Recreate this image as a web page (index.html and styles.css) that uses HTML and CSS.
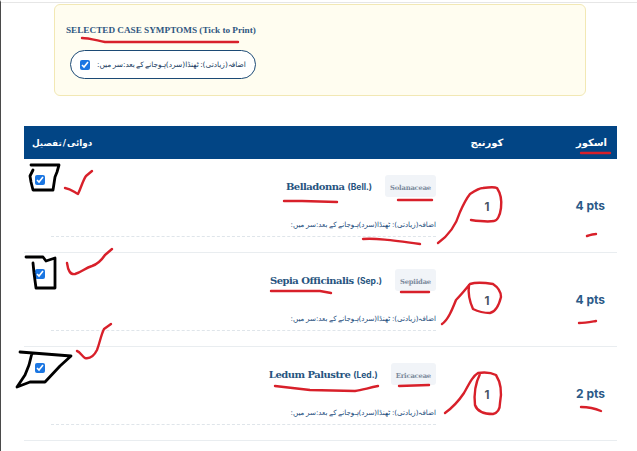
FILE: index.html
```html
<!DOCTYPE html>
<html lang="ur">
<head>
<meta charset="utf-8">
<title>Selected case symptoms</title>
<link rel="stylesheet" href="styles.css">
</head>
<body>
<main class="page">
  <section class="symptoms">
    <h2 class="symptoms-title">SELECTED CASE SYMPTOMS (Tick to Print)</h2>
    <label class="symptom-pill">
      <input type="checkbox" class="tick" checked>
      <span class="symptom-text" dir="rtl">اضافہ(زیادتی): ٹھنڈا(سرد)ہوجانے کے بعد:سر میں:</span>
    </label>
  </section>

  <section class="results">
    <div class="row head">
      <div class="col-main" dir="rtl">دوائی / تفصیل</div>
      <div class="col-cover" dir="rtl">کورنیج</div>
      <div class="col-score" dir="rtl">اسکور</div>
    </div>

    <article class="row item">
      <div class="col-main">
        <input type="checkbox" class="tick" checked>
        <div class="detail">
          <div class="title-line">
            <h3 class="name">Belladonna <small class="abbr">(Bell.)</small></h3>
            <span class="family">Solanaceae</span>
          </div>
          <p class="rubric" dir="rtl">اضافہ(زیادتی): ٹھنڈا(سرد)ہوجانے کے بعد:سر میں:</p>
        </div>
      </div>
      <div class="col-cover count">1</div>
      <div class="col-score pts">4 pts</div>
    </article>

    <article class="row item">
      <div class="col-main">
        <input type="checkbox" class="tick" checked>
        <div class="detail">
          <div class="title-line">
            <h3 class="name">Sepia Officinalis <small class="abbr">(Sep.)</small></h3>
            <span class="family">Sepiidae</span>
          </div>
          <p class="rubric" dir="rtl">اضافہ(زیادتی): ٹھنڈا(سرد)ہوجانے کے بعد:سر میں:</p>
        </div>
      </div>
      <div class="col-cover count">1</div>
      <div class="col-score pts">4 pts</div>
    </article>

    <article class="row item">
      <div class="col-main">
        <input type="checkbox" class="tick" checked>
        <div class="detail">
          <div class="title-line">
            <h3 class="name">Ledum Palustre <small class="abbr">(Led.)</small></h3>
            <span class="family">Ericaceae</span>
          </div>
          <p class="rubric" dir="rtl">اضافہ(زیادتی): ٹھنڈا(سرد)ہوجانے کے بعد:سر میں:</p>
        </div>
      </div>
      <div class="col-cover count">1</div>
      <div class="col-score pts">2 pts</div>
    </article>
  </section>
</main>

<svg class="ink" viewBox="0 0 637 451" width="637" height="451" aria-hidden="true">
  <g class="ink-red">
    <path d="M82 38 C88 38 95 40 105 42 L238 42"/>
    <path d="M581 153 L610 153"/>
    <path d="M65 188 C71 189 74 192 78 194 C81 188 83 180 86 176 L92 171"/>
    <path d="M284 201 L302 201 L337 202"/>
    <path d="M398 200 L432 200"/>
    <path d="M363 239 C375 238 390 240 420 244"/>
    <path d="M438 243 C448 236 456 225 460 212 C464 203 466 199 470 194 C476 190 480 188 483 188 C490 187 495 187 497 188 C501 194 502 200 501 208 C500 216 497 221 494 221 C488 222 478 221 471 220"/>
    <path d="M587 236 C590 235 593 234 596 234"/>
    <path d="M67 263 C68 270 70 275 75 274 C82 272 85 268 92 266 C98 264 103 258 105 255 L112 249"/>
    <path d="M271 291 L320 291 L331 293"/>
    <path d="M401 292 L429 292"/>
    <path d="M442 324 C448 320 452 310 456 300 C461 295 465 290 470 284 C476 282 487 283 493 284 C499 288 501 292 501 297 C499 305 495 312 490 313 C483 313 477 311 473 309 C469 300 468 292 469 285"/>
    <path d="M579 323 C585 323 590 322 596 321"/>
    <path d="M77 351 C80 352 82 356 85 358 C90 359 94 356 97 350 C100 342 101 335 104 329 L111 324"/>
    <path d="M275 386 L310 390 L355 391 C362 390 368 388 378 386"/>
    <path d="M399 386 L429 385"/>
    <path d="M445 413 C452 408 458 402 464 393 C470 382 473 376 478 373 C485 372 492 373 496 375 C501 383 502 393 500 403 C500 410 497 413 493 414 C484 414 477 411 475 405 C474 396 474 386 480 374"/>
    <path d="M581 407 C588 407 594 408 601 411"/>
  </g>
  <g class="ink-black">
    <path d="M31 165 L59 165 L57 172 L55 177 L53 190 L33 190 L31 182 L30 176 L33 170"/>
    <path d="M26 257 L43 257 L46 261 L55 258 L55 288 L36 288 L34 273 L33 263"/>
    <path d="M20 352 L71 356 L60 366 L45 382 L30 382 L17 387 L25 375 L29 365 L32 353"/>
  </g>
</svg>
</body>
</html>
```

FILE: styles.css
```css
* { box-sizing: border-box; }

html, body {
  margin: 0;
  height: 451px;
  overflow: hidden;
  background: #fff;
}

body {
  position: relative;
  font-family: Inter, "Liberation Sans", sans-serif;
  border-left: 1px solid #4a4a4a;
  border-top: 2px solid #fff;
}

.page {
  padding: 1px 20px 0 23px;
  border-top: 1px solid #e6e6e6;
}

.symptoms {
  margin: 0 31px 0 30px;
  height: 92px;
  background: #fffdf0;
  border: 1px solid #f2e8b4;
  border-radius: 6px;
  padding: 17px 11px 0;
}

.symptoms-title {
  margin: 0;
  font: bold 9.2px/16px "Liberation Serif", serif;
  color: #2f5680;
}

.symptom-pill {
  display: inline-flex;
  align-items: center;
  gap: 7px;
  margin: 12px 0 0 4px;
  height: 29px;
  padding: 0 9px;
  background: #fff;
  border: 1px solid #1c4a75;
  border-radius: 15px;
}

.symptom-text {
  font: 7.4px/14px "DejaVu Sans", sans-serif;
  word-spacing: -1px;
  color: #16395e;
}

.tick {
  width: 10px;
  height: 10px;
  margin: 0;
  flex: none;
  accent-color: #1b76e2;
}

.results { margin-top: 30px; }

.row {
  display: grid;
  grid-template-columns: 422px 82px 88px;
}

.head {
  height: 33px;
  align-items: center;
  background: #024585;
  color: #fff;
  font: bold 10px/14px "DejaVu Sans", sans-serif;
}

.head .col-main {
  justify-self: start;
  padding-left: 8px;
  word-spacing: -2px;
  font-size: 8.8px;
}
.head .col-cover { text-align: center; }
.head .col-score { text-align: right; padding-right: 9px; }

.item {
  height: 94px;
  border-bottom: 1px solid #e9edf0;
  padding-top: 1px;
}

.col-main { display: flex; }

.item .col-main > .tick { margin: 15px 0 0 11px; }

.detail {
  flex: 1;
  margin-left: 6px;
  margin-right: 10px;
  padding-top: 15px;
}

.title-line {
  display: flex;
  justify-content: flex-end;
  align-items: center;
  gap: 13px;
  height: 22px;
}

.name {
  margin: 0;
  padding-top: 2px;
  font: bold 10px/16px "DejaVu Serif", serif;
  letter-spacing: -0.5px;
  color: #275480;
}

.abbr {
  font: bold 8.5px/16px Inter, sans-serif;
  letter-spacing: 0;
}

.family {
  display: flex;
  align-items: flex-end;
  height: 22px;
  padding: 0 5px 4px;
  background: #f1f4f8;
  border-radius: 3px;
  font: bold 6.8px/10px "DejaVu Serif", serif;
  letter-spacing: -0.2px;
  color: #7c8a9c;
}

.rubric {
  margin: 21px 0 0;
  height: 19px;
  border-bottom: 1px dashed #dfe5ea;
  font: 7.1px/13px "DejaVu Sans", sans-serif;
  word-spacing: -0.5px;
  color: #1d4c7c;
  text-align: right;
}

.count {
  padding-top: 39px;
  text-align: center;
  font: bold 11.5px/16px Inter, sans-serif;
  color: #4b5563;
}

.pts {
  padding: 38px 11px 0 0;
  text-align: right;
  font: bold 12px/16px Inter, sans-serif;
  color: #2b5a88;
}

.ink {
  position: absolute;
  left: -1px;
  top: -2px;
  pointer-events: none;
}

.ink path {
  fill: none;
  stroke-linecap: round;
  stroke-linejoin: round;
}

.ink-red path {
  stroke: #d8202a;
  stroke-width: 2.4;
}

.ink-black path {
  stroke: #000;
  stroke-width: 2.8;
}
```
